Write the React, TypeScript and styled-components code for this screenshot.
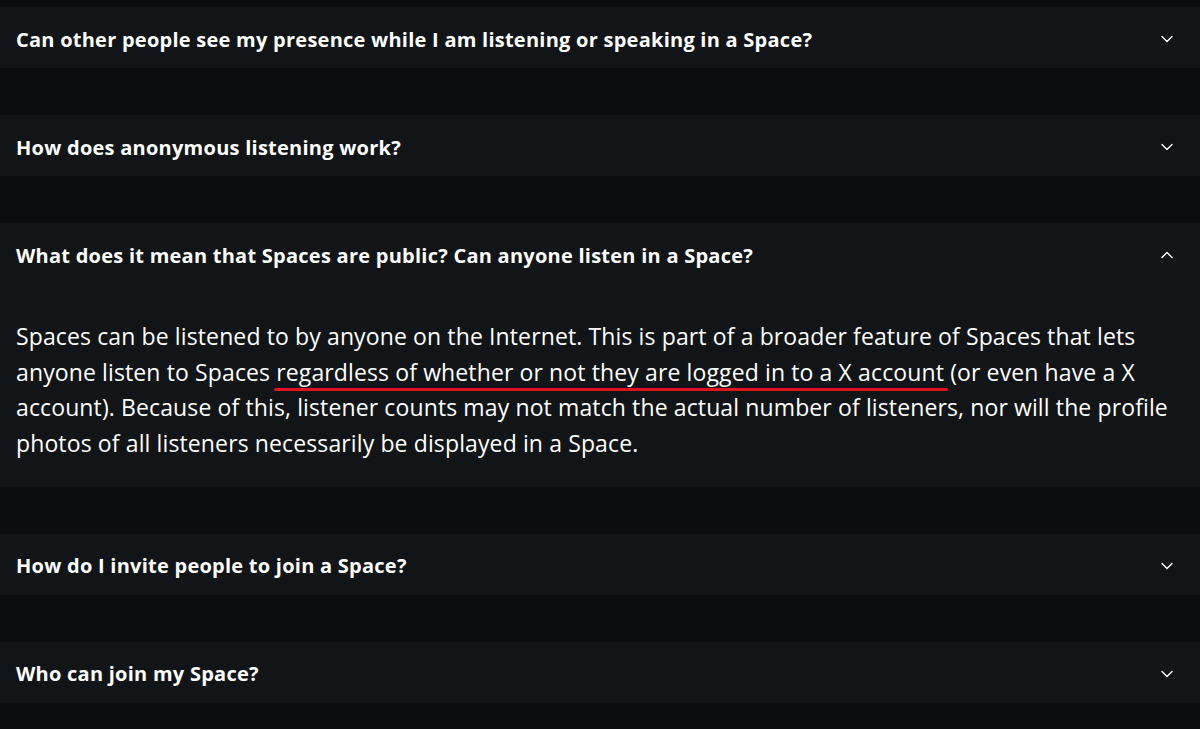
import React from "react";
import styled, { createGlobalStyle } from "styled-components";

const Global = createGlobalStyle`
  html, body { margin: 0; padding: 0; background: #0c0d0f; }
  body { font-family: "Open Sans", "Noto Sans", sans-serif; color: #ffffff; }
`;

const Page = styled.div`
  display: flex;
  flex-direction: column;
  gap: 47px;
  padding-top: 7px;
  min-height: 729px;
  box-sizing: border-box;
  background: #0c0d0f;
`;

const Card = styled.section`
  background: #121517;
  display: flex;
  flex-direction: column;
`;

const Header = styled.div`
  height: 61px;
  box-sizing: border-box;
  display: flex;
  align-items: center;
  justify-content: space-between;
  padding: 3px 27px 0 16px;
`;

const Question = styled.h3`
  margin: 0;
  font-family: "Open Sans", "Noto Sans", sans-serif;
  font-weight: 700;
  font-size: 20px;
  letter-spacing: 0.25px;
  color: #ffffff;
`;

const Answer = styled.p`
  margin: 0;
  padding: 35px 16px 25px 16px;
  font-family: "Open Sans", "Noto Sans", sans-serif;
  font-size: 23px;
  line-height: 35.7px;
  letter-spacing: 0.12px;
  color: #ffffff;
`;

const Marked = styled.span`
  position: relative;
  &::after {
    content: "";
    position: absolute;
    left: -2px;
    right: -4px;
    bottom: -3px;
    height: 3px;
    border-radius: 2px;
    background: #e2111d;
  }
`;

const Chevron = ({ up }: { up?: boolean }) => (
  <svg width="12" height="8" viewBox="0 0 12 8" fill="none">
    <path
      d={up ? "M1 6.5 L6 1.5 L11 6.5" : "M1 1.5 L6 6.5 L11 1.5"}
      stroke="#ffffff"
      strokeWidth="1.4"
      strokeLinecap="round"
      strokeLinejoin="round"
    />
  </svg>
);

const items = [
  { q: "Can other people see my presence while I am listening or speaking in a Space?" },
  { q: "How does anonymous listening work?" },
  { q: "What does it mean that Spaces are public? Can anyone listen in a Space?", open: true },
  { q: "How do I invite people to join a Space?" },
  { q: "Who can join my Space?" },
];

export default function App() {
  return (
    <>
      <Global />
      <Page>
        {items.map((it) => (
          <Card key={it.q}>
            <Header>
              <Question>{it.q}</Question>
              <Chevron up={it.open} />
            </Header>
            {it.open && (
              <Answer>
                Spaces can be listened to by anyone on the Internet. This is part of a broader feature of Spaces that lets anyone listen to Spaces{" "}
                <Marked>regardless of whether or not they are logged in to a X account</Marked>{" "}
                (or even have a X account). Because of this, listener counts may not match the actual number of listeners, nor will the profile photos of all listeners necessarily be displayed in a Space.
              </Answer>
            )}
          </Card>
        ))}
      </Page>
    </>
  );
}
